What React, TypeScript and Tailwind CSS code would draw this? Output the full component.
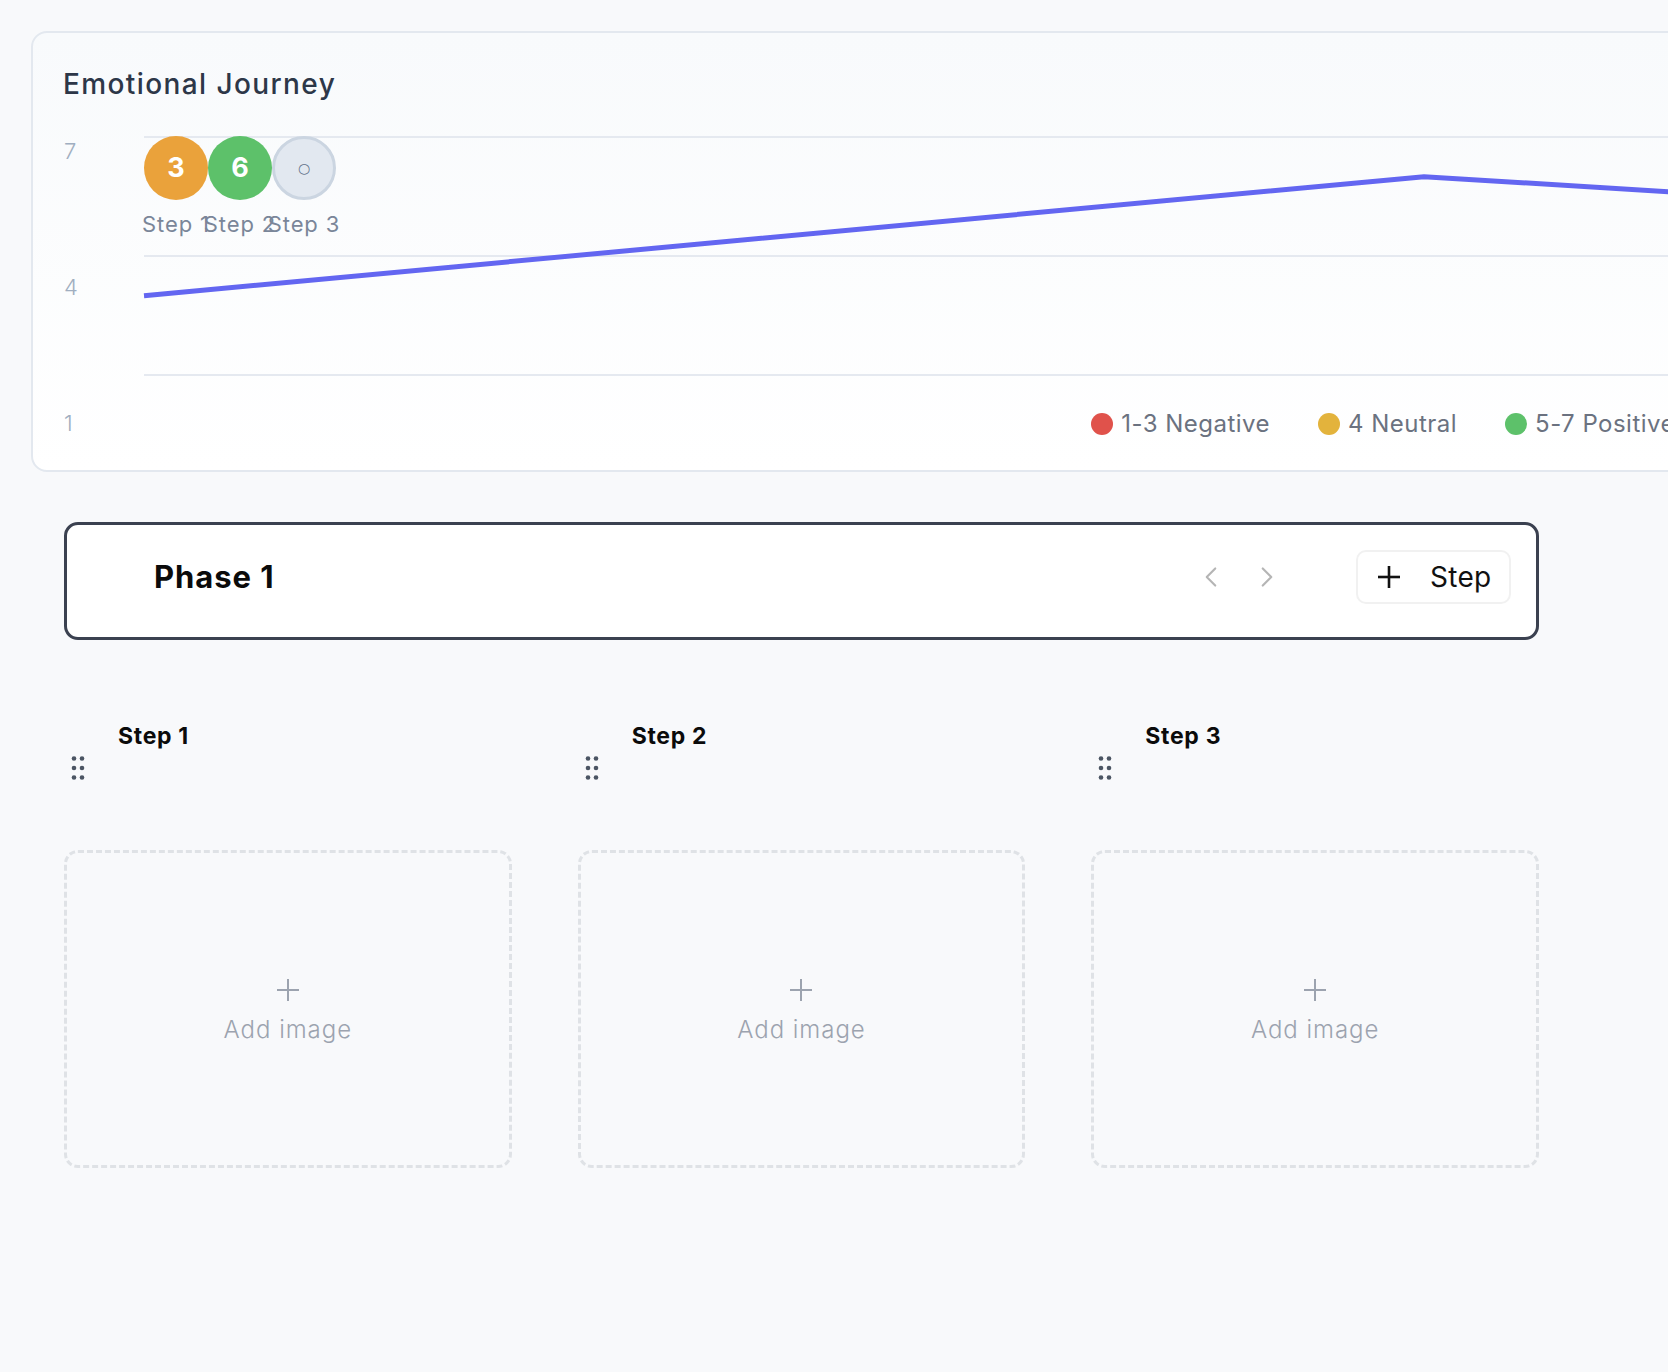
import React from 'react';
import { ChevronLeft, ChevronRight } from 'lucide-react';

const font = { fontFamily: 'Inter, "Noto Sans", sans-serif' };

const points = [
  { label: 'Step 1', value: 3, color: 'bg-[#eaa23b]' },
  { label: 'Step 2', value: 6, color: 'bg-[#5dc16a]' },
  { label: 'Step 3', value: null, color: '' },
];

function PlusIcon({ size, color, width }: { size: number; color: string; width: number }) {
  return (
    <svg width={size} height={size} viewBox="0 0 22 22" fill="none" stroke={color} strokeWidth={width}>
      <line x1="11" y1="0" x2="11" y2="22" />
      <line x1="0" y1="11" x2="22" y2="11" />
    </svg>
  );
}

function Grip() {
  return (
    <svg width="16" height="26" viewBox="0 0 16 26" fill="#4b5563" className="ml-[6px]">
      <circle cx="4" cy="3.5" r="2.3" />
      <circle cx="12" cy="3.5" r="2.3" />
      <circle cx="4" cy="13" r="2.3" />
      <circle cx="12" cy="13" r="2.3" />
      <circle cx="4" cy="22.5" r="2.3" />
      <circle cx="12" cy="22.5" r="2.3" />
    </svg>
  );
}

function JourneyChart() {
  const h = 238;
  const y = (v: number) => ((7 - v) / 6) * h;
  const line = `0,${y(3)} 1280,${y(6)} 2560,${y(4)}`;

  return (
    <div className="w-[1700px] rounded-2xl border-2 border-[#e3e8ef] bg-gradient-to-b from-[#f8fafc] to-white pt-[33px] pb-[30px] overflow-hidden">
      <h2 className="pl-[30px] text-[28px] leading-[36px] font-medium tracking-[0.05em] text-[#2d3748]">Emotional Journey</h2>

      <div className="mt-[35px] flex items-start">
        {/* y axis */}
        <div className="w-[111px] h-[300px] pl-[31px] flex flex-col justify-between text-[22px] leading-[28px] font-light text-[#a0aec0]">
          <span>7</span>
          <span>4</span>
          <span>1</span>
        </div>

        <div className="flex-1 flex flex-col">
          <div className="relative h-[238px]">
            <svg width="100%" height={h} className="overflow-visible">
              <line x1="0" y1="0" x2="100%" y2="0" stroke="#e5e9f0" strokeWidth="2" />
              <line x1="0" y1={h / 2} x2="100%" y2={h / 2} stroke="#e5e9f0" strokeWidth="2" />
              <line x1="0" y1={h} x2="100%" y2={h} stroke="#e5e9f0" strokeWidth="2" />
              <polyline points={line} fill="none" stroke="#6366f1" strokeWidth="5" strokeLinejoin="round" />
            </svg>

            {/* score markers */}
            <div className="absolute left-0 top-[-1px] flex">
              {points.map((p) => (
                <div key={p.label} className="w-16 flex flex-col items-center">
                  {p.value !== null ? (
                    <div className={`w-16 h-16 rounded-full ${p.color} flex items-center justify-center text-white text-[27px] font-bold`}>
                      {p.value}
                    </div>
                  ) : (
                    <div className="w-16 h-16 rounded-full bg-[#e2e8f0] border-[3px] border-[#cbd5e1] flex items-center justify-center text-[#64748b] text-[14px]" style={{ fontFamily: '"DejaVu Sans", sans-serif' }}>
                      ○
                    </div>
                  )}
                  <span className="mt-3 whitespace-nowrap text-[22px] leading-[24px] tracking-[0.04em] text-[#7a8699]">{p.label}</span>
                </div>
              ))}
            </div>
          </div>

          {/* legend */}
          <div className="mt-[33px] pr-[54px] flex justify-end items-center gap-[48px] text-[24px] leading-[32px] text-[#6b7280] tracking-[0.02em]">
            <div className="flex items-center gap-2">
              <span className="w-[22px] h-[22px] rounded-full bg-[#e0524b]" />
              <span>1-3 Negative</span>
            </div>
            <div className="flex items-center gap-2">
              <span className="w-[22px] h-[22px] rounded-full bg-[#e3b33c]" />
              <span>4 Neutral</span>
            </div>
            <div className="flex items-center gap-2">
              <span className="w-[22px] h-[22px] rounded-full bg-[#5dc16a]" />
              <span>5-7 Positive</span>
            </div>
          </div>
        </div>
      </div>
    </div>
  );
}

function StepColumn({ title }: { title: string }) {
  return (
    <div className="flex flex-col">
      <div className="pl-[54px] text-[23px] leading-[28px] font-bold text-[#0b0b0b] tracking-[0.03em]">{title}</div>
      <div className="mt-[5px]">
        <Grip />
      </div>
      <button className="mt-[69px] h-[318px] pt-[6px] rounded-[14px] border-[3px] border-dashed border-[#dfe2e6] flex flex-col items-center justify-center">
        <PlusIcon size={22} color="#9ca3af" width={2} />
        <span className="mt-[14px] text-[24px] leading-[30px] font-light tracking-[0.04em] text-[#9ca3af]">Add image</span>
      </button>
    </div>
  );
}

export default function App() {
  return (
    <div className="min-h-screen overflow-hidden bg-[#f8f9fb] pt-[31px] pl-[31px]" style={font}>
      <JourneyChart />

      <div className="pl-[33px] w-[1508px]">
        <div className="mt-[50px] h-[118px] rounded-[14px] border-[3.5px] border-[#3b4150] bg-white flex items-center pb-2 pl-[87px] pr-[25px]">
          <h1 className="text-[31px] font-bold text-[#0b0b0b] tracking-[0.03em]">Phase 1</h1>
          <div className="ml-auto flex items-center gap-[22px] text-[#b5b5b5]">
            <ChevronLeft size={34} strokeWidth={1.5} />
            <ChevronRight size={34} strokeWidth={1.5} />
          </div>
          <button className="ml-[72px] h-[54px] w-[155px] rounded-[10px] border-2 border-[#f1f1f1] flex items-center pl-[20px]">
            <PlusIcon size={22} color="#111" width={2.6} />
            <span className="ml-[30px] text-[28px] leading-[34px] text-[#111] tracking-[0.01em]">Step</span>
          </button>
        </div>

        <div className="mt-[82px] grid grid-cols-3 gap-x-[66px]">
          <StepColumn title="Step 1" />
          <StepColumn title="Step 2" />
          <StepColumn title="Step 3" />
        </div>
      </div>
    </div>
  );
}
